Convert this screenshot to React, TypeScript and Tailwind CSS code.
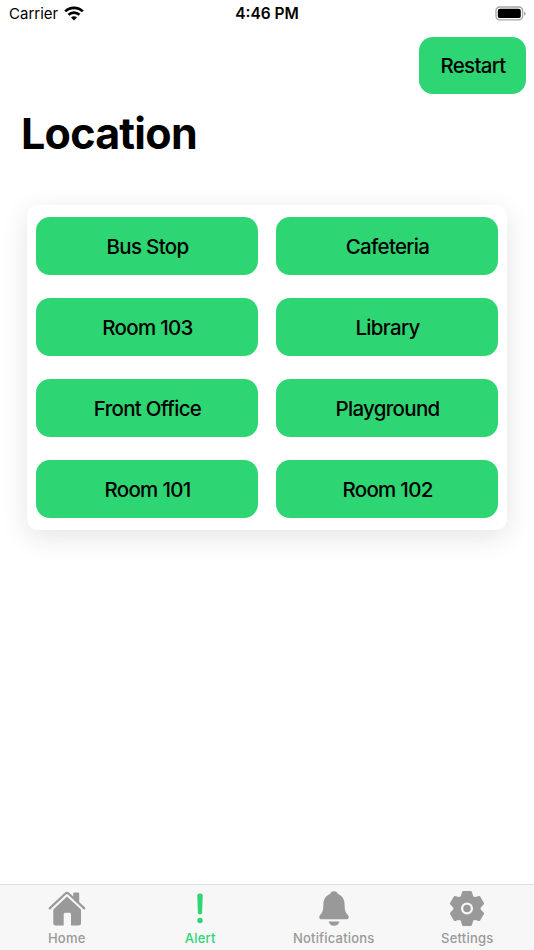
import React from "react";

const locations = [
  "Bus Stop",
  "Cafeteria",
  "Room 103",
  "Library",
  "Front Office",
  "Playground",
  "Room 101",
  "Room 102",
];

const WifiIcon = () => (
  <svg className="-mt-0.5" width="20" height="15" viewBox="0 0 20 15" fill="none" stroke="black" strokeWidth="2.7">
    <path d="M1.2 5.4C6 .7 14 .7 18.8 5.4" />
    <path d="M4.500 8.800c3.100-2.900 7.900-2.900 11 0" />
    <path d="M10 14.400 7 11.400c1.700-1.500 4.300-1.500 6 0z" fill="black" stroke="none" />
  </svg>
);

const BatteryIcon = () => (
  <svg width="32" height="15" viewBox="0 0 32 15">
    <rect x="1" y="1" width="26.6" height="12.8" rx="3.6" fill="none" stroke="#a6a6a6" strokeWidth="1.3" />
    <rect x="2.8" y="2.7" width="23" height="9.4" rx="2.2" fill="black" />
    <path d="M29.2 5.2c1.8.9 1.8 3.7 0 4.6z" fill="#999" />
  </svg>
);

const HomeIcon = () => (
  <svg width="38" height="38" viewBox="0 0 38 38" fill="currentColor">
    <path d="M1.700 18.400 17.500 3.500a2.100 2.100 0 0 1 3 0L36.300 18.400" fill="none" stroke="currentColor" strokeWidth="2.2" strokeLinecap="round" />
    <path d="M25.200 3.500a1 1 0 0 1 1-1h4a1 1 0 0 1 1 1v9.700l-6-5.600z" />
    <path d="M5.300 19.500 19 6.600l14 12.900v13.600a2.500 2.500 0 0 1-2.500 2.500H23V24.300a1.500 1.500 0 0 0-1.500-1.500h-4.300a1.500 1.500 0 0 0-1.500 1.500v11.300H7.800a2.500 2.500 0 0 1-2.500-2.500z" />
  </svg>
);

const AlertIcon = () => (
  <svg width="38" height="38" viewBox="0 0 38 38" fill="currentColor">
    <path d="M16.300 6.300a2.700 2.700 0 0 1 5.400 0L21.100 22.500a2.100 2.100 0 0 1-4.200 0z" />
    <circle cx="19" cy="30.500" r="2.700" />
  </svg>
);

const BellIcon = () => (
  <svg width="38" height="38" viewBox="0 0 38 38" fill="currentColor">
    <path d="M19 1.200c2.100 0 3.300 1.200 4 2.800 4.500 1.700 6.600 5.500 6.600 10.300 0 6.300 1 8.300 3.200 10.700 1.800 2 .9 4.300-1.500 4.300H6.700c-2.400 0-3.300-2.300-1.500-4.300 2.200-2.400 3.200-4.400 3.200-10.700C8.400 9.500 10.500 5.700 15 4c.7-1.600 1.900-2.800 4-2.800Z" />
    <path d="M13.600 31.400h10.800c-.6 2.600-2.700 4.300-5.400 4.300s-4.800-1.700-5.400-4.300Z" />
  </svg>
);

const GearIcon = () => (
  <svg width="38" height="38" viewBox="-19 -18.500 38 38" fill="currentColor">
    <path
      d="M-3.800-16.300H3.800L5.300-11.500 7.500-10.300 12.200-11.400 16-4.900 12.600-1.200V1.200L16 4.900 12.200 11.400 7.500 10.300 5.300 11.500 3.800 16.300H-3.800L-5.300 11.500-7.500 10.300-12.200 11.400-16 4.900-12.600 1.200V-1.200L-16-4.900-12.200-11.400-7.500-10.300-5.300-11.500Z"
      stroke="currentColor"
      strokeWidth="2.200"
      strokeLinejoin="round"
    />
    <circle r="4.900" fill="currentColor" stroke="#f7f7f7" strokeWidth="2.300" />
  </svg>
);

const tabs = [
  { label: "Home", icon: <HomeIcon />, active: false },
  { label: "Alert", icon: <AlertIcon />, active: true },
  { label: "Notifications", icon: <BellIcon />, active: false },
  { label: "Settings", icon: <GearIcon />, active: false },
];

export default function App() {
  return (
    <div className="flex h-[950px] w-[534px] flex-col overflow-hidden bg-white font-['Inter',sans-serif] text-black">
      {/* Status bar */}
      <header className="grid h-7 grid-cols-3 items-center px-[9px]">
        <div className="flex items-center gap-1.5">
          <span className="text-[15px] leading-7">Carrier</span>
          <WifiIcon />
        </div>
        <span className="text-center text-[15.500px] leading-7 font-semibold">4:46 PM</span>
        <div className="-mt-px -mr-0.5 flex justify-end">
          <BatteryIcon />
        </div>
      </header>

      <div className="flex justify-end pt-[9px] pr-2">
        <button className="h-[57px] w-[107px] rounded-[14px] bg-[#2ed573] pt-px pl-px text-[20.500px] font-medium tracking-[-0.7px]">
          Restart
        </button>
      </div>

      <h1 className="mt-3 ml-[21px] text-[43px] leading-[54px] font-bold tracking-[-0.75px]">Location</h1>

      <main className="mx-[27px] mt-[45px] grid h-[325px] grid-cols-2 gap-x-[18px] gap-y-[23px] rounded-[11px] bg-white px-[9px] py-3 shadow-[0_7px_28px_rgba(0,0,0,0.11)]">
        {locations.map((name) => (
          <button
            key={name}
            className="h-[58px] rounded-[14px] bg-[#2ed573] pt-0.5 pl-px text-[20.500px] font-medium tracking-[-0.7px]"
          >
            {name}
          </button>
        ))}
      </main>

      {/* Tab bar */}
      <nav className="mt-auto grid h-[66px] grid-cols-4 border-t border-[#e0e0e0] bg-[#f7f7f7]">
        {tabs.map(({ label, icon, active }) => (
          <button
            key={label}
            className={`flex flex-col items-center pt-[5px] ${active ? "text-[#2ed573]" : "text-[#999999]"}`}
          >
            {icon}
            <span className="mt-[2px] text-[13px] leading-4 font-medium tracking-[0.2px]">{label}</span>
          </button>
        ))}
      </nav>
    </div>
  );
}
